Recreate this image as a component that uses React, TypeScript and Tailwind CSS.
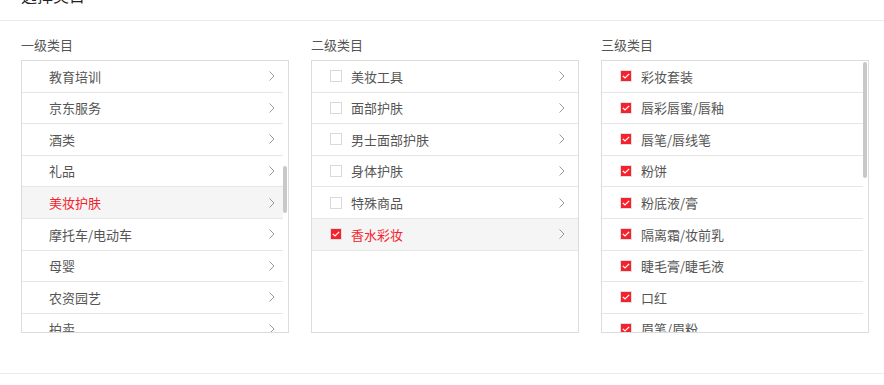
import React from "react"

type Item = { name: string; active?: boolean; checked?: boolean }

const level1: Item[] = [
  { name: "教育培训" },
  { name: "京东服务" },
  { name: "酒类" },
  { name: "礼品" },
  { name: "美妆护肤", active: true },
  { name: "摩托车/电动车" },
  { name: "母婴" },
  { name: "农资园艺" },
  { name: "拍卖" },
]

const level2: Item[] = [
  { name: "美妆工具" },
  { name: "面部护肤" },
  { name: "男士面部护肤" },
  { name: "身体护肤" },
  { name: "特殊商品" },
  { name: "香水彩妆", active: true, checked: true },
]

const level3: Item[] = [
  "彩妆套装",
  "唇彩唇蜜/唇釉",
  "唇笔/唇线笔",
  "粉饼",
  "粉底液/膏",
  "隔离霜/妆前乳",
  "睫毛膏/睫毛液",
  "口红",
  "眉笔/眉粉",
].map((name) => ({ name, checked: true }))

function Chevron() {
  return (
    <svg width="6" height="10" viewBox="0 0 6 10" className="shrink-0">
      <path d="M0.5 0.5 L5 5 L0.5 9.5" fill="none" stroke="#999" strokeWidth="1" />
    </svg>
  )
}

function Checkbox({ checked }: { checked?: boolean }) {
  if (checked) {
    return (
      <span className="flex h-3 w-3 shrink-0 items-center justify-center border border-[#e0e0e0] bg-[#f5222d]">
        <svg width="8" height="6" viewBox="0 0 8 6">
          <path d="M0.8 2.8 L3 5 L7.2 0.8" fill="none" stroke="#fff" strokeWidth="1.2" />
        </svg>
      </span>
    )
  }
  return <span className="h-3 w-3 shrink-0 border border-[#d9d9d9] bg-white" />
}

function Column({
  title,
  items,
  checkbox,
  arrow,
  thumb,
}: {
  title: string
  items: Item[]
  checkbox?: boolean
  arrow?: boolean
  thumb?: string
}) {
  return (
    <div className="w-[268px]">
      <div className="h-5 text-[13px] leading-5 text-[#555]">{title}</div>
      <div className="relative mt-[5px] h-[273px] overflow-hidden border border-[#dcdcdc] bg-white">
        {items.map((item) => (
          <div
            key={item.name}
            className={`flex h-[31.6px] items-center border-b border-[#e6e6e6] pr-[13px] text-[13px] ${
              checkbox ? "pl-[18px]" : "pl-[27px]"
            } ${item.active ? "bg-[#f5f5f5] text-[#f5222d]" : "text-[#555]"}`}
          >
            {checkbox && <Checkbox checked={item.checked} />}
            <span className={`flex-1 ${checkbox ? "ml-[9px]" : ""}`}>{item.name}</span>
            {arrow && <Chevron />}
          </div>
        ))}
        {thumb && (
          <div className="absolute top-0 right-0 bottom-0 w-[5px] bg-white">
            <div className={`absolute right-px w-1 rounded-sm bg-[#c8c8c8] ${thumb}`} />
          </div>
        )}
      </div>
    </div>
  )
}

export default function App() {
  return (
    <div className="w-[884px] bg-white font-['Noto_Sans_CJK_SC','Noto_Sans',sans-serif]">
      <div className="-mt-[13px] border-b border-[#ebebeb] pb-[17px] pl-[21px] text-[16px] leading-4 text-[#222]">
        选择类目
      </div>
      <div className="flex gap-[22px] pt-[14px] pl-[21px] pb-[40px]">
        <Column title="一级类目" items={level1} arrow thumb="top-[105px] h-[47px]" />
        <Column title="二级类目" items={level2} checkbox arrow />
        <Column title="三级类目" items={level3} checkbox thumb="top-[1px] h-[116px]" />
      </div>
      <div className="border-b border-[#ebebeb]" />
    </div>
  )
}
